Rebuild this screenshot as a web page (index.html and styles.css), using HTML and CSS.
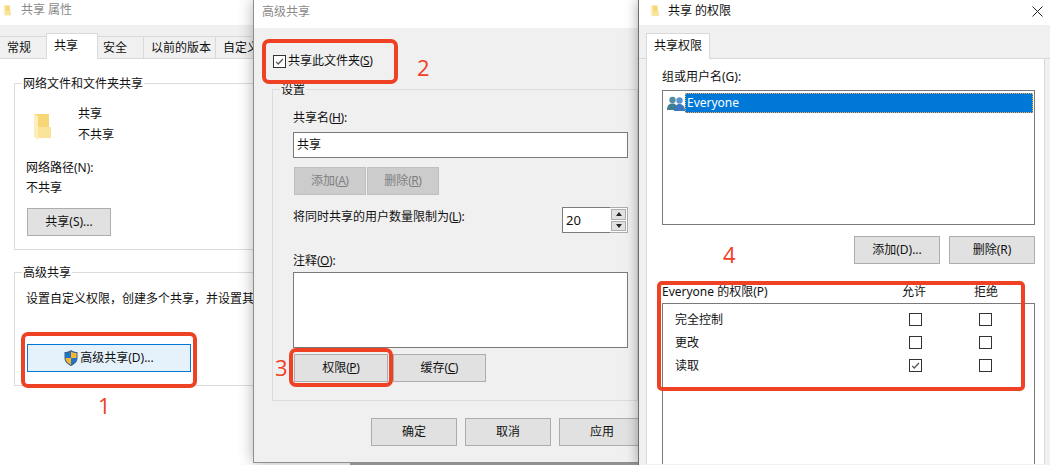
FILE: index.html
```html
<!DOCTYPE html>
<html lang="zh-CN">
<head>
<meta charset="utf-8">
<title>共享 属性</title>
<link rel="stylesheet" href="styles.css">
</head>
<body>
<svg class="defs" width="0" height="0">
  <defs>
    <symbol id="folder" viewBox="0 0 18 27">
      <path d="M1 1 H16 V14 H18 V25 H5 Z" fill="#f6d677"/>
      <path d="M5 14 H18 V25 H5 Z" fill="#fae39a"/>
      <path d="M1 1 L5 3 V27 L1 24 Z" fill="#fdeeba"/>
    </symbol>
    <symbol id="check" viewBox="0 0 13 13">
      <path d="M2.500 7 L5 9.500 L10.500 3.500" fill="none" stroke="#555" stroke-width="1.500"/>
    </symbol>
  </defs>
</svg>

<section class="window w-props">
  <header class="titlebar tb-props">
    <svg class="ico-small"><use href="#folder"/></svg>
    <span class="title-muted">共享 属性</span>
  </header>
  <nav class="tabs tabs-props">
    <span class="tab tab-a">常规</span>
    <span class="tab tab-on tab-b">共享</span>
    <span class="tab tab-c">安全</span>
    <span class="tab tab-d">以前的版本</span>
    <span class="tab tab-e">自定义</span>
  </nav>
  <div class="props-body">
    <div class="group group-net">
      <span class="legend">网络文件和文件夹共享</span>
      <div class="share-head">
        <svg class="ico-big"><use href="#folder"/></svg>
        <div class="share-names">
          <div>共享</div>
          <div>不共享</div>
        </div>
      </div>
      <div class="line net-label">网络路径(N):</div>
      <div class="line">不共享</div>
      <button class="btn btn-share">共享(S)...</button>
    </div>
    <div class="group group-adv">
      <span class="legend">高级共享</span>
      <div class="line">设置自定义权限，创建多个共享，并设置其他高级共享选项。</div>
      <button class="btn btn-adv">
        <svg class="shield" viewBox="0 0 14 16">
          <path d="M7 0 C5 1.500 3 2 0.500 2 L0.500 8 C0.500 12 4 14.500 7 16 C10 14.500 13.500 12 13.500 8 L13.500 2 C11 2 9 1.500 7 0 Z" fill="#3f5f86"/>
          <path d="M7 1.500 L7 8 L1.500 8 L1.500 3 C3.500 3 5.500 2.500 7 1.500 Z" fill="#1f75c9"/>
          <path d="M7 1.500 C8.500 2.500 10.500 3 12.500 3 L12.500 8 L7 8 Z" fill="#f6b62e"/>
          <path d="M1.500 8 L7 8 L7 14.800 C4.500 13.500 1.500 11.500 1.500 8 Z" fill="#f6b62e"/>
          <path d="M7 8 L12.500 8 C12.500 11.500 9.500 13.500 7 14.800 Z" fill="#1f75c9"/>
        </svg>
        <span>高级共享(D)...</span>
      </button>
    </div>
  </div>
</section>

<div class="under-strip"></div>

<section class="window w-adv">
  <header class="titlebar tb-adv"><span class="title-muted">高级共享</span></header>
  <div class="adv-body">
    <label class="share-check">
      <span class="cb"><svg class="cb-mark"><use href="#check"/></svg></span>
      <span>共享此文件夹(<u>S</u>)</span>
    </label>
    <div class="group group-set">
      <span class="legend legend-grey">设置</span>
      <div class="line">共享名(<u>H</u>):</div>
      <div class="field field-name">共享</div>
      <div class="btn-row row-disabled">
        <button class="btn btn-off"><span>添加(<u>A</u>)</span></button>
        <button class="btn btn-off"><span>删除(<u>R</u>)</span></button>
      </div>
      <div class="limit-row">
        <span class="limit-label">将同时共享的用户数量限制为(<u>L</u>):</span>
        <div class="spin">
          <span class="spin-val">20</span>
          <div class="spin-btns">
            <span class="spin-btn"><i class="arrow-up"></i></span>
            <span class="spin-btn"><i class="arrow-down"></i></span>
          </div>
        </div>
      </div>
      <div class="line note-label">注释(<u>O</u>):</div>
      <div class="field field-note"></div>
      <div class="btn-row row-perm">
        <button class="btn btn-perm"><span>权限(<u>P</u>)</span></button>
        <button class="btn btn-cache"><span>缓存(<u>C</u>)</span></button>
      </div>
    </div>
    <div class="footer">
      <button class="btn btn-foot">确定</button>
      <button class="btn btn-foot">取消</button>
      <button class="btn btn-foot">应用</button>
    </div>
  </div>
</section>

<section class="window w-perm">
  <header class="titlebar tb-perm">
    <svg class="ico-title"><use href="#folder"/></svg>
    <span class="title-dark">共享 的权限</span>
    <svg class="close" viewBox="0 0 11 11"><path d="M0.500 0.500 L10.500 10.500 M10.500 0.500 L0.500 10.500" stroke="#222" stroke-width="1" fill="none"/></svg>
  </header>
  <nav class="tabs tabs-perm"><span class="tab tab-on tab-f">共享权限</span></nav>
  <div class="perm-panel">
    <div class="line">组或用户名(G):</div>
    <div class="listbox">
      <div class="list-row">
        <svg class="users" viewBox="0 0 18 15">
          <circle cx="5.500" cy="4" r="3.200" fill="#4f8f9f"/>
          <path d="M0 14 C0 9 2.500 7.500 5.500 7.500 C8.500 7.500 10 9 10 14 Z" fill="#3f7f8f"/>
          <circle cx="12.500" cy="4.500" r="3.200" fill="#5b93cf"/>
          <path d="M7 15 C7 10 9.500 8 12.500 8 C15.500 8 18 10 18 15 Z" fill="#3b78bd"/>
        </svg>
        <span class="list-sel">Everyone</span>
      </div>
    </div>
    <div class="btn-row row-list">
      <button class="btn btn-foot">添加(D)...</button>
      <button class="btn btn-foot">删除(R)</button>
    </div>
    <div class="perm-head">
      <span>Everyone 的权限(P)</span><span>允许</span><span>拒绝</span>
    </div>
    <div class="perm-box">
      <div class="perm-row"><span>完全控制</span><span class="cb"></span><span class="cb"></span></div>
      <div class="perm-row"><span>更改</span><span class="cb"></span><span class="cb"></span></div>
      <div class="perm-row"><span>读取</span><span class="cb"><svg class="cb-mark"><use href="#check"/></svg></span><span class="cb"></span></div>
    </div>
  </div>
</section>

<div class="mark mark-1"></div>
<div class="mark mark-2"></div>
<div class="mark mark-3"></div>
<div class="mark mark-4"></div>
<span class="num num-1">1</span>
<span class="num num-2">2</span>
<span class="num num-3">3</span>
<span class="num num-4">4</span>
</body>
</html>
```
FILE: styles.css
```css
* { box-sizing: border-box; }
html, body { margin: 0; padding: 0; height: 465px; overflow: hidden; }
body {
  width: 1050px; position: relative;
  background: #fff; color: #111;
  font: 12px/20px "Noto Sans", "Noto Sans CJK SC", sans-serif;
}
.defs { position: absolute; }
u { text-underline-offset: 1px; margin: 0 -0.5px; }

.window { position: absolute; top: 0; background: #fff; }
.w-props { left: 0; width: 254px; height: 465px; }
.w-adv {
  left: 253px; width: 386px; height: 463px;
  border-left: 1px solid #8f8f8f; border-bottom: 1px solid #8f8f8f;
  box-shadow: 0 0 14px rgba(0,0,0,.3);
  background: #f0f0f0;
}
.w-perm {
  left: 638px; width: 412px; height: 465px;
  border-left: 1px solid #6e6e6e;
  box-shadow: 0 0 12px rgba(0,0,0,.35);
  background: #f0f0f0;
}
.under-strip { position: absolute; left: 350px; top: 463px; width: 290px; height: 2px; background: #a8a8a8; }

.titlebar { display: flex; align-items: center; background: #fff; }
.tb-props { height: 25px; padding: 0 0 5px 2px; }
.tb-adv { height: 28px; padding: 0 0 4px 8px; }
.tb-perm { height: 26px; padding: 0 7px 5px 11px; }
.ico-small { width: 10px; height: 11px; margin-right: 9px; }
.ico-title { width: 9px; height: 12px; margin-right: 9px; }
.title-muted { color: #8a8a8a; }
.title-dark { color: #111; flex: 1; }
.close { width: 11px; height: 11px; margin-top: 1px; }

.tabs { display: flex; align-items: flex-end; background: #f0f0f0; border-bottom: 1px solid #d9d9d9; }
.tabs-props { height: 34px; }
.tabs-perm { height: 34px; padding-left: 7px; margin-top: -1px; }
.tab {
  height: 22px; line-height: 22px; padding-left: 7px; white-space: nowrap;
  border: 1px solid #d9d9d9; border-bottom: 0; border-left: 0;
  flex: none;
}
.tab-on { height: 26px; line-height: 24px; background: #fff; border-left: 1px solid #d9d9d9; margin-bottom: -1px; }
.tab-a { width: 47px; }
.tab-b { width: 52px; margin-left: -1px; }
.tab-c { width: 46px; padding-left: 5px; }
.tab-d { width: 72px; }
.tab-e { width: 60px; }
.tab-f { width: 64px; padding-left: 7px; }

.props-body { padding: 24px 0 0 14px; }
.group { position: relative; border: 1px solid #dcdcdc; }
.legend { position: absolute; top: -10px; left: 7px; padding: 0 1px; background: #fff; white-space: nowrap; }
.legend-grey { background: #f0f0f0; left: 7px; }
.line { white-space: nowrap; }
.group-net { width: 400px; height: 167px; padding: 19px 0 0 11px; }
.share-head { display: flex; align-items: flex-start; padding-left: 7px; }
.ico-big { width: 18px; height: 27px; margin-top: 10px; margin-right: 27px; flex: none; }
.share-names div { line-height: 21px; }
.net-label { margin-top: 13px; }
.btn {
  display: flex; align-items: center; justify-content: center; gap: 2px; flex: none;
  font: inherit; color: #111; padding: 0; cursor: default; white-space: nowrap;
  background: #e1e1e1; border: 1px solid #adadad; border-radius: 0;
  height: 28px;
}
.btn-share { width: 84px; margin-top: 10px; margin-left: 1px; }
.group-adv { width: 400px; height: 114px; margin-top: 22px; padding: 16px 0 0 11px; }
.btn-adv { width: 164px; margin-top: 35px; margin-left: 1px; background: #e5f1fb; border-color: #0078d7; }
.shield { width: 14px; height: 16px; flex: none; }

.adv-body { display: flex; flex-direction: column; background: #f0f0f0; }
.share-check { display: flex; align-items: center; gap: 2px; margin-top: 23px; padding-left: 19px; height: 20px; }
.cb { display: block; width: 13px; height: 13px; border: 1px solid #333; background: #fff; flex: none; position: relative; }
.cb-mark { display: block; width: 11px; height: 11px; }
.group-set { width: 366px; height: 312px; margin: 18px 0 0 18px; padding: 18px 0 0 20px; }
.field { border: 1px solid #7a7a7a; background: #fff; width: 335px; }
.field-name { height: 26px; margin-top: 4px; padding: 2px 0 0 3px; }
.btn-row { display: flex; }
.row-disabled { margin-top: 9px; margin-left: 1px; gap: 1px; }
.btn-off { width: 72px; background: #cccccc; border-color: #bfbfbf; color: #7f7f7f; }
.limit-row { display: flex; justify-content: space-between; width: 335px; margin-top: 12px; }
.spin { display: flex; width: 66px; height: 26px; }
.spin-val { flex: 1; border: 1px solid #7a7a7a; border-right: 0; background: #fff; padding: 2px 0 0 3px; font-size: 13px; }
.spin-btns { width: 18px; border: 1px solid #adadad; border-left: 0; background: #fff; display: flex; flex-direction: column; gap: 1px; padding: 1px; }
.spin-btn { flex: 1; background: #e1e1e1; border: 1px solid #adadad; display: flex; align-items: center; justify-content: center; }
.arrow-up { border: 3px solid transparent; border-top: 0; border-bottom: 4px solid #222; }
.arrow-down { border: 3px solid transparent; border-bottom: 0; border-top: 4px solid #222; }
.note-label { margin-top: 18px; }
.field-note { height: 76px; margin-top: 1px; }
.row-perm { margin-top: 6px; margin-left: 1px; gap: 5px; }
.btn-perm { width: 94px; }
.btn-cache { width: 93px; }
.footer { display: flex; gap: 8px; margin: 17px 0 0 117px; }
.btn-foot { width: 86px; }

.perm-panel {
  width: 399px; height: 405px; margin-left: 7px; padding: 8px 0 0 15px;
  background: #fff; border-left: 1px solid #d9d9d9; border-right: 1px solid #d9d9d9;
}
.listbox { width: 373px; height: 135px; margin-top: 3px; border: 1px solid #7a7a7a; background: #fff; padding: 2px 1px 0; }
.list-row { display: flex; align-items: center; height: 20px; padding-left: 3px; }
.users { width: 18px; height: 15px; flex: none; }
.list-sel {
  flex: 1; height: 20px; line-height: 18px; color: #fff; background: #0078d7;
  border: 1px dotted #f5a54a; padding-left: 1px;
}
.row-list { justify-content: flex-end; gap: 9px; width: 373px; margin-top: 11px; }
.perm-head { display: grid; grid-template-columns: 240px 72px auto; margin-top: 18px; white-space: nowrap; }
.perm-box { width: 373px; height: 161px; margin-top: 1px; border: 1px solid #7a7a7a; border-bottom: 0; padding: 4px 0 0 12px; }
.perm-row { display: grid; grid-template-columns: 234px 70px 13px; align-items: center; height: 23px; }

.mark { position: absolute; border: 4px solid #ef4123; border-radius: 7px; }
.mark-1 { left: 21px; top: 332px; width: 176px; height: 56px; }
.mark-2 { left: 262px; top: 39px; width: 136px; height: 45px; }
.mark-3 { left: 289px; top: 348px; width: 104px; height: 39px; }
.mark-4 { left: 657px; top: 281px; width: 368px; height: 110px; border-radius: 5px; }
.num { position: absolute; color: #ef4123; font: 400 22px/24px "Open Sans", sans-serif; }
.num-1 { left: 98px; top: 393px; }
.num-2 { left: 417px; top: 55px; }
.num-3 { left: 275px; top: 355px; }
.num-4 { left: 723px; top: 242px; }
```
